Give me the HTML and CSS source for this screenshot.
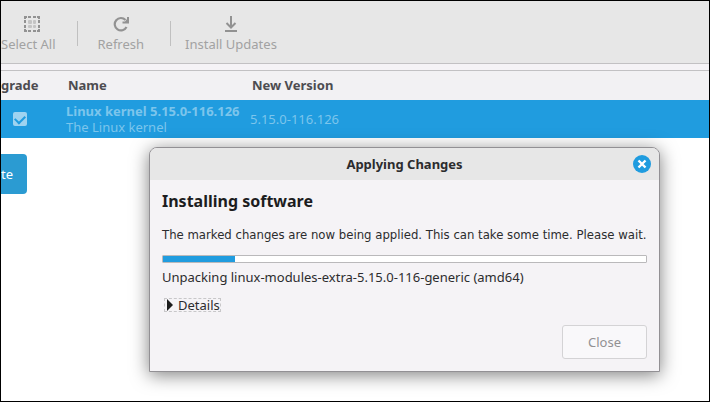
FILE: index.html
```
<!DOCTYPE html>
<html lang="en">

<head>
    <meta charset="UTF-8">
    <meta name="viewport" content="width=device-width, initial-scale=1.0">
    <title>Update Manager</title>
    <link rel="stylesheet" href="styles.css">
</head>

<body>
    <!-- Toolbar -->
    <div class="toolbar">
        <button class="tool select-all" type="button" disabled>
            <svg width="16" height="16" viewBox="0 0 16 16">
                <g fill="#929292">
                    <path d="M0 0h3v2H2v1H0zM4 0h3v2H4zM9 0h3v2H9zM13 0h3v3h-2V2h-1z" />
                    <path d="M0 13h2v1h1v2H0zM4 14h3v2H4zM9 14h3v2H9zM14 13h2v3h-3v-2h1z" />
                    <path d="M0 4h2v3H0zM0 9h2v3H0zM14 4h2v3h-2zM14 9h2v3h-2z" />
                </g>
                <g fill="#c4c4c4">
                    <rect x="4" y="4" width="4" height="4" rx="1" />
                    <rect x="9" y="4" width="3" height="4" rx="1" />
                    <rect x="4" y="9" width="4" height="3" rx="1" />
                    <rect x="9" y="9" width="3" height="3" rx="1" />
                </g>
            </svg>
            <span>Select All</span>
        </button>
        <span class="separator"></span>
        <button class="tool refresh" type="button" disabled>
            <svg width="16" height="16" viewBox="0 0 16 16">
                <path d="M12.500 4A6.200 6.200 0 1 0 13.500 11" fill="none" stroke="#929292" stroke-width="2.200" />
                <path d="M16 1v6.500h-6.500V5.500H12L14 3V1z" fill="#929292" />
            </svg>
            <span>Refresh</span>
        </button>
        <span class="separator"></span>
        <button class="tool" type="button" disabled>
            <svg width="16" height="16" viewBox="0 0 16 16">
                <path d="M8 0v11M3.500 7L8 11.500 12.500 7M2 15h12" fill="none" stroke="#929292" stroke-width="2" />
            </svg>
            <span>Install Updates</span>
        </button>
    </div>

    <!-- Update list -->
    <table class="updates">
        <thead>
            <tr>
                <th class="col-check">grade</th>
                <th class="col-name">Name</th>
                <th>New Version</th>
            </tr>
        </thead>
        <tbody>
            <tr>
                <td class="col-check"><input type="checkbox" aria-label="Upgrade Linux kernel" checked></td>
                <td class="col-name">
                    <strong>Linux kernel 5.15.0-116.126</strong>
                    <span>The Linux kernel</span>
                </td>
                <td>5.15.0-116.126</td>
            </tr>
        </tbody>
    </table>

    <button class="side-button" type="button">te</button>

    <!-- Progress dialog -->
    <section class="dialog" role="dialog" aria-labelledby="dialog-title">
        <header class="titlebar">
            <h1 id="dialog-title">Applying Changes</h1>
            <button class="close-icon" type="button" aria-label="Close window">
                <svg width="10" height="10" viewBox="0 0 10 10">
                    <path d="M1.500 1.500l7 7M8.500 1.500l-7 7" stroke="#fff" stroke-width="2.400" />
                </svg>
            </button>
        </header>
        <div class="dialog-body">
            <h2>Installing software</h2>
            <p class="message">The marked changes are now being applied. This can take some time. Please wait.</p>
            <div class="progress" role="progressbar" aria-label="Installing" aria-valuenow="15" aria-valuemin="0" aria-valuemax="100">
                <div class="progress-fill" style="width: 15%"></div>
            </div>
            <p>Unpacking linux-modules-extra-5.15.0-116-generic (amd64)</p>
            <details>
                <summary>
                    <svg width="6" height="12" viewBox="0 0 6 12">
                        <path d="M0 0l6 6-6 6z" fill="#1c1c1c" />
                    </svg>
                    Details
                </summary>
            </details>
            <button class="close-button" type="button" disabled>Close</button>
        </div>
    </section>
</body>

</html>
```

FILE: styles.css
```
* {
    box-sizing: border-box;
    margin: 0;
    padding: 0;
}

body {
    position: relative;
    min-height: 100vh;
    overflow: hidden;
    border: 1px solid #000;
    background: #fff;
    color: #2c2c2e;
    font-family: "Noto Sans", sans-serif;
    font-size: 13px;
    line-height: 16px;
}

button {
    font: inherit;
    border: none;
}

svg {
    display: block;
}
/* Toolbar */

.toolbar {
    display: flex;
    align-items: center;
    height: 63px;
    padding-top: 3px;
    border-bottom: 1px solid #c2c1c3;
    background: #e7e7e7;
}

.tool {
    display: flex;
    flex-direction: column;
    align-items: center;
    gap: 4px;
    background: none;
    color: #a2a2a2;
    white-space: nowrap;
}

.select-all svg {
    margin-left: 8px;
}

.refresh {
    padding: 0 4px 0 5px;
}

.separator {
    width: 1px;
    height: 25px;
    margin: 0 14px 0 22px;
    background: #c0c0c0;
}
/* Update list */

.updates {
    width: 100%;
    border-spacing: 0;
    border-top: 6px solid #f5f3f6;
}

.updates th {
    height: 30px;
    padding-bottom: 1px;
    border-top: 1px solid #c2c1c3;
    background: #f2f1f3;
    color: #4d4c50;
    text-align: left;
}

.updates td {
    height: 38px;
    background: #209cdf;
    color: #7cc5ec;
}

.col-check {
    width: 65px;
}

.col-name {
    width: 184px;
    white-space: nowrap;
}

.updates th + th {
    padding-left: 2px;
}

.col-name strong,
.col-name span {
    display: block;
}

.col-check input {
    display: flex;
    align-items: center;
    justify-content: center;
    appearance: none;
    width: 14px;
    height: 14px;
    margin-left: 12px;
    padding-bottom: 2px;
    border-radius: 2px;
    background: #9ed3f0;
}

.col-check input::before {
    content: "";
    width: 8px;
    height: 5px;
    border: solid #209cdf;
    border-width: 0 0 2px 2px;
    transform: rotate(-45deg);
}

.side-button {
    width: 26px;
    height: 40px;
    margin-top: 16px;
    border-radius: 0 4px 4px 0;
    background: #2b9bd2;
    color: #fff;
    text-align: left;
}
/* Progress dialog */

.dialog {
    position: absolute;
    top: 146px;
    left: 148px;
    right: 49px;
    border: 1px solid #929094;
    border-radius: 8px 8px 0 0;
    background: #f5f3f6;
    box-shadow: 0 3px 18px rgba(0, 0, 0, 0.5);
}

.titlebar {
    display: grid;
    grid-template-columns: 1fr auto 1fr;
    align-items: center;
    height: 32px;
    padding: 0 8px;
    border-radius: 7px 7px 0 0;
    background: #e7e7e7;
}

.titlebar h1 {
    grid-column: 2;
    font-size: 13px;
}

.close-icon {
    display: flex;
    align-items: center;
    justify-content: center;
    justify-self: end;
    width: 18px;
    height: 18px;
    border-radius: 50%;
    background: #209cdf;
}

.dialog-body {
    display: flex;
    flex-direction: column;
    align-items: flex-start;
    padding: 11px 12px 12px;
}

.dialog h2 {
    margin-bottom: 16px;
    font-size: 16px;
    line-height: 20px;
    color: #1c1c1e;
}

.dialog p {
    white-space: nowrap;
}

.dialog .message {
    font-family: "DejaVu Sans Condensed", "Open Sans", sans-serif;
}

.progress {
    width: 100%;
    height: 8px;
    margin: 12px 0 6px;
    border: 1px solid #bab9bb;
    border-radius: 1px;
    background: #fff;
}

.progress-fill {
    height: 100%;
    background: #209cdf;
}

details {
    margin: 14px 0 0 3px;
}

summary {
    display: flex;
    align-items: center;
    gap: 5px;
    height: 12px;
    padding-left: 2px;
    outline: 1px dashed #c8c7c9;
    list-style: none;
}

.close-button {
    align-self: flex-end;
    width: 85px;
    height: 34px;
    margin-top: 14px;
    border: 1px solid #d4d3d5;
    border-radius: 3px;
    background: #f9f8fa;
    color: #929193;
}
```
